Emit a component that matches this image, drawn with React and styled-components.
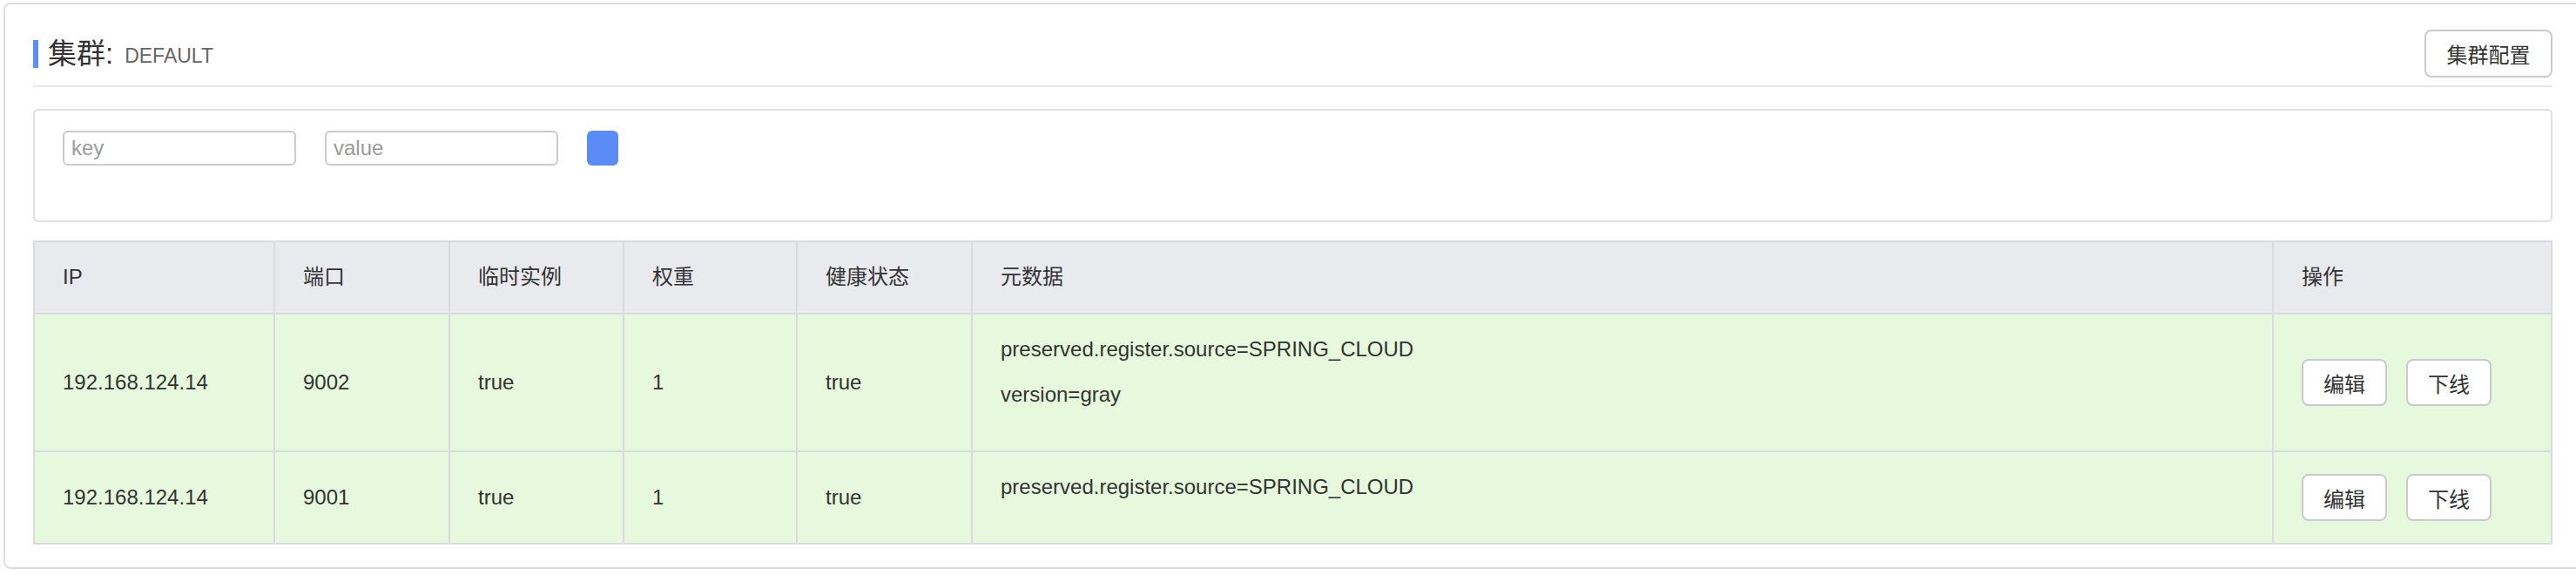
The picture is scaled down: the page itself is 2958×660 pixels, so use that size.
import React from 'react'
import styled, { createGlobalStyle } from 'styled-components'

const GlobalStyle = createGlobalStyle`
    html, body {
        margin:0;
        padding:0;
        background:#fff;
        overflow:hidden;
    }
    body {
        font-family:"Liberation Sans", "Noto Sans CJK SC", sans-serif;
        color:#333;
    }
    * { box-sizing:border-box; }
`

const instances = [
    { ip: '192.168.124.14', port: '9002', ephemeral: 'true', weight: '1', healthy: 'true',
      metadata: ['preserved.register.source=SPRING_CLOUD', 'version=gray'] },
    { ip: '192.168.124.14', port: '9001', ephemeral: 'true', weight: '1', healthy: 'true',
      metadata: ['preserved.register.source=SPRING_CLOUD'] },
]

const columns = [
    { title: 'IP', width: 278 },
    { title: '端口', width: 201 },
    { title: '临时实例', width: 200 },
    { title: '权重', width: 199 },
    { title: '健康状态', width: 201 },
    { title: '元数据', width: 1494 },
    { title: '操作', width: 320 },
]

const App = () => {
    return (
        <Page>
            <GlobalStyle />
            <Card>
                <Header>
                    <Title>
                        <Marker />
                        <TitleMain>集群:</TitleMain>
                        <TitleName>DEFAULT</TitleName>
                    </Title>
                    <Button $height={55} $width={147}>集群配置</Button>
                </Header>
                <FilterBox>
                    <FilterInput placeholder="key" />
                    <FilterInput placeholder="value" />
                    <SearchButton />
                </FilterBox>
                <Table>
                    <thead>
                        <tr>
                            {columns.map((c) => (
                                <Th key={c.title} style={{ width: c.width }}>{c.title}</Th>
                            ))}
                        </tr>
                    </thead>
                    <tbody>
                        {instances.map((row) => (
                            <tr key={row.port}>
                                <Td>{row.ip}</Td>
                                <Td>{row.port}</Td>
                                <Td>{row.ephemeral}</Td>
                                <Td>{row.weight}</Td>
                                <Td>{row.healthy}</Td>
                                <MetaCell>
                                    {row.metadata.map((m) => (
                                        <MetaItem key={m}>{m}</MetaItem>
                                    ))}
                                </MetaCell>
                                <Td>
                                    <Actions>
                                        <Button $height={54} $width={98}>编辑</Button>
                                        <Button $height={54} $width={98}>下线</Button>
                                    </Actions>
                                </Td>
                            </tr>
                        ))}
                    </tbody>
                </Table>
            </Card>
        </Page>
    )
}

export default App


const Page = styled.div`
    padding:3px 0 0 4px;
    width:2958px;
    height:660px;
    overflow:hidden;
`

const Card = styled.div`
    width:2961px;
    border:2px solid #dcdde1;
    border-radius:8px;
    padding:0 32px 26px 32px;
    background:#fff;
`

const Header = styled.div`
    display:flex;
    align-items:center;
    justify-content:space-between;
    padding:29px 0 9px 0;
    border-bottom:2px solid #e6e7eb;
`

const Title = styled.div`
    display:flex;
    align-items:center;
`

const Marker = styled.span`
    display:block;
    width:6px;
    height:32px;
    background:#5b8ff9;
    margin-right:11px;
`

const TitleMain = styled.span`
    font-size:33px;
    line-height:40px;
    color:#333;
`

const TitleName = styled.span`
    font-size:23px;
    line-height:40px;
    color:#666;
    margin-left:13px;
    padding-top:4px;
`

const Button = styled.button`
    height:${(p) => p.$height}px;
    width:${(p) => p.$width}px;
    padding:0;
    border:2px solid #c8cacf;
    border-radius:8px;
    background:#fff;
    color:#333;
    font-family:"Liberation Sans", "Noto Sans CJK SC", sans-serif;
    font-size:24px;
    cursor:pointer;
`

const FilterBox = styled.div`
    margin-top:25px;
    height:130px;
    border:2px solid #dfe0e4;
    border-radius:6px;
    padding:23px 32px;
    display:flex;
    align-items:flex-start;
    gap:33px;
`

const FilterInput = styled.input`
    width:268px;
    height:40px;
    border:2px solid #c9cbd0;
    border-radius:6px;
    padding:0 8px;
    font-family:"Liberation Sans", "Noto Sans CJK SC", sans-serif;
    font-size:24px;
    color:#333;
    outline:none;
    &::placeholder {
        color:#9a9a9a;
    }
`

const SearchButton = styled.button`
    width:36px;
    height:40px;
    border:none;
    border-radius:6px;
    background:#5a8bf6;
    padding:0;
`

const Table = styled.table`
    margin-top:21px;
    width:2893px;
    table-layout:fixed;
    border-collapse:separate;
    border-spacing:0;
    font-size:24px;
    line-height:32px;
    color:#333;
`

const Th = styled.th`
    background:#e9eaee;
    text-align:left;
    font-weight:normal;
    padding:24px 0 25px 32px;
    border-top:2px solid #dadbe0;
    border-right:2px solid #dadbe0;
    border-bottom:2px solid #dadbe0;
    &:first-child {
        border-left:2px solid #dadbe0;
    }
`

const Td = styled.td`
    background:#e6f9dc;
    padding:0 0 0 32px;
    vertical-align:middle;
    border-right:2px solid #dadbe0;
    border-bottom:2px solid #dadbe0;
    &:first-child {
        border-left:2px solid #dadbe0;
    }
`

const MetaCell = styled(Td)`
    vertical-align:top;
    padding:24px 0 28px 32px;
`

const MetaItem = styled.p`
    margin:0 0 20px 0;
    line-height:32px;
`

const Actions = styled.div`
    display:flex;
    gap:22px;
`
